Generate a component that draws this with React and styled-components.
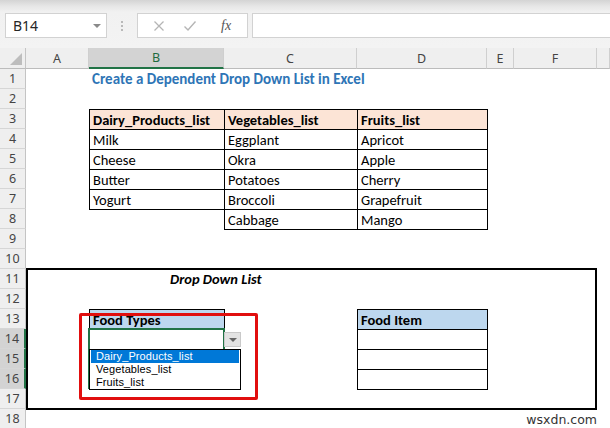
import React from 'react';
import styled, { createGlobalStyle, css } from 'styled-components';

const GlobalStyle = createGlobalStyle`
  html, body {
    margin: 0;
    padding: 0;
    background: #fff;
    overflow: hidden;
  }
`;

const cellFont = `Carlito, Lato, "Liberation Sans", sans-serif`;
const uiFont = `"Noto Sans", "Open Sans", sans-serif`;

const Window = styled.div`
  width: 610px;
  height: 428px;
  overflow: hidden;
  background: #fff;
  font-family: ${uiFont};
`;

/* ---------- formula bar ---------- */

const FormulaBar = styled.div`
  height: 48px;
  box-sizing: border-box;
  display: flex;
  align-items: flex-start;
  padding: 13px 0 0 5px;
  background: linear-gradient(#d4d4d4 0px, #e6e6e6 6px, #f1f1f1 12px, #f3f3f3 100%);
`;

const Box = styled.div`
  height: 25px;
  box-sizing: border-box;
  background: #fff;
  border: 1px solid #d2d2d2;
  display: flex;
  align-items: center;
`;

const NameBox = styled(Box)`
  width: 102px;
  padding: 0 0 0 7px;
  justify-content: space-between;
  font-size: 14px;
  color: #262626;
`;

const NameArrow = styled.span`
  width: 0;
  height: 0;
  margin-right: 5px;
  border-left: 4px solid transparent;
  border-right: 4px solid transparent;
  border-top: 4px solid #8a8a8a;
`;

const Grip = styled.div`
  width: 30px;
  height: 25px;
  display: flex;
  flex-direction: column;
  align-items: center;
  justify-content: center;
  gap: 2px;

  span {
    width: 2px;
    height: 2px;
    background: #b9b9b9;
  }
`;

const FnBox = styled(Box)`
  width: 111px;
  padding: 0 0 0 15px;
  gap: 18px;
`;

const FxLabel = styled.span`
  font-family: "Liberation Serif", serif;
  font-style: italic;
  font-size: 14px;
  color: #555;
  margin-left: 6px;
`;

const FormulaInput = styled(Box)`
  flex: 1;
  margin-left: 4px;
  border-right: none;
`;

/* ---------- sheet grid ---------- */

const Sheet = styled.div`
  position: relative;
  display: grid;
  grid-template-columns: 26px 63px 135px 133px 130px 27px 83px 1fr;
  grid-template-rows: 21px repeat(18, 20px);
`;

const Corner = styled.div`
  grid-row: 1;
  grid-column: 1;
  background: #efefef;
  border-right: 1px solid #c4c4c4;
  border-bottom: 1px solid #bcbcbc;
  box-sizing: border-box;
  position: relative;

  &::after {
    content: '';
    position: absolute;
    right: 3px;
    bottom: 3px;
    border-left: 12px solid transparent;
    border-bottom: 12px solid #bdbdbd;
  }
`;

const ColHead = styled.div`
  grid-row: 1;
  grid-column: ${({ $col }) => $col};
  box-sizing: border-box;
  display: flex;
  align-items: center;
  justify-content: center;
  font-size: 12.5px;
  color: #444;
  background: #efefef;
  border-right: 1px solid #cfcfcf;
  border-bottom: 1px solid #bcbcbc;
  ${({ $active }) =>
    $active &&
    css`
      background: #d3d3d3;
      color: #1e6b3f;
      border-bottom: 2px solid #217346;
    `}
`;

const RowHead = styled.div`
  grid-column: 1;
  grid-row: ${({ $row }) => $row + 1};
  box-sizing: border-box;
  display: flex;
  align-items: center;
  justify-content: center;
  font-size: 12.5px;
  color: #444;
  background: #efefef;
  border-right: 1px solid #c4c4c4;
  border-bottom: 1px solid #d6d6d6;
  ${({ $active }) =>
    $active &&
    css`
      background: #d3d3d3;
      border-right: 2px solid #217346;
    `}
`;

const Cell = styled.div`
  grid-row: ${({ $row }) => $row + 1};
  grid-column: ${({ $col }) => $col};
  box-sizing: border-box;
  margin: 0 -1px -1px 0;
  padding: 0 3px;
  display: flex;
  align-items: center;
  font-family: ${cellFont};
  font-size: 14.5px;
  color: #000;
  white-space: nowrap;
  background: ${({ $bg }) => $bg || 'transparent'};
  font-weight: ${({ $bold }) => ($bold ? 700 : 400)};
  border: ${({ $border }) => ($border ? '1px solid #000' : 'none')};
`;

const Title = styled.div`
  grid-row: 2;
  grid-column: 3 / 6;
  padding-left: 3px;
  display: flex;
  align-items: center;
  font-family: ${cellFont};
  font-size: 15px;
  font-weight: 700;
  color: #2e75b6;
  white-space: nowrap;
`;

const SectionFrame = styled.div`
  grid-row: 12 / 19;
  grid-column: 2 / 8;
  margin: -1px 0 -1px 0;
  border: 2px solid #000;
  pointer-events: none;
`;

const SectionLabel = styled.div`
  grid-row: 12;
  grid-column: 3 / 5;
  padding-left: 81px;
  display: flex;
  align-items: center;
  font-family: ${cellFont};
  font-size: 14.5px;
  font-weight: 700;
  font-style: italic;
  white-space: nowrap;
`;

const Selection = styled.div`
  grid-row: 15 / 18;
  grid-column: 3;
  margin: -1px -1px 0 -1px;
  border: 2px solid #217346;
  position: relative;

  &::after {
    content: '';
    position: absolute;
    right: -4px;
    bottom: -4px;
    width: 5px;
    height: 5px;
    background: #217346;
    border: 1px solid #fff;
  }
`;

/* ---------- validation dropdown ---------- */

const DropButton = styled.div`
  position: absolute;
  left: 224px;
  top: 284px;
  width: 17px;
  height: 15px;
  box-sizing: border-box;
  background: #e3e3e3;
  border: 1px solid #c9c9c9;
  display: flex;
  align-items: center;
  justify-content: center;

  &::before {
    content: '';
    border-left: 4px solid transparent;
    border-right: 4px solid transparent;
    border-top: 4px solid #666;
  }
`;

const DropList = styled.ul`
  position: absolute;
  left: 89px;
  top: 301px;
  width: 152px;
  margin: 0;
  padding: 0 1px;
  list-style: none;
  box-sizing: border-box;
  background: #fff;
  border: 1px solid #000;
`;

const DropItem = styled.li`
  height: 13px;
  line-height: 13px;
  padding-left: 5px;
  font-family: "Liberation Sans", Arial, sans-serif;
  font-size: 11px;
  letter-spacing: 0.1px;
  color: #000;
  white-space: nowrap;
  ${({ $selected }) =>
    $selected &&
    css`
      background: #0078d7;
      color: #fff;
    `}
`;

const Callout = styled.div`
  position: absolute;
  left: 79px;
  top: 265px;
  width: 179px;
  height: 87px;
  box-sizing: border-box;
  border: 3px solid #e10e0e;
  border-radius: 2px;
  pointer-events: none;
`;

const Watermark = styled.div`
  position: absolute;
  right: 12px;
  bottom: 2px;
  font-family: "DejaVu Sans", Verdana, sans-serif;
  font-size: 12.5px;
  color: #333;
  background: #fff;
  padding: 0 1px;
`;

const columns = ['A', 'B', 'C', 'D', 'E', 'F', ''];

const dairy = ['Milk', 'Cheese', 'Butter', 'Yogurt'];
const vegetables = ['Eggplant', 'Okra', 'Potatoes', 'Broccoli', 'Cabbage'];
const fruits = ['Apricot', 'Apple', 'Cherry', 'Grapefruit', 'Mango'];
const peach = '#fce4d6';
const blue = '#bdd7ee';

const XIcon = () => (
  <svg width="12" height="12" viewBox="0 0 12 12">
    <path d="M1.5 1.5 L10.5 10.5 M10.5 1.5 L1.5 10.5" stroke="#b5b5b5" strokeWidth="1.3" fill="none" />
  </svg>
);

const CheckIcon = () => (
  <svg width="14" height="12" viewBox="0 0 14 12">
    <path d="M1.5 6.5 L5 10 L12.5 1.5" stroke="#b5b5b5" strokeWidth="1.4" fill="none" />
  </svg>
);

const App = () => {
  const rows = Array.from({ length: 18 }, (_, i) => i + 1);

  return (
    <Window>
      <GlobalStyle />
      <FormulaBar>
        <NameBox>
          B14
          <NameArrow />
        </NameBox>
        <Grip>
          <span />
          <span />
          <span />
        </Grip>
        <FnBox>
          <XIcon />
          <CheckIcon />
          <FxLabel>fx</FxLabel>
        </FnBox>
        <FormulaInput />
      </FormulaBar>

      <Sheet>
        <Corner />
        {columns.map((c, i) => (
          <ColHead key={i} $col={i + 2} $active={c === 'B'}>
            {c}
          </ColHead>
        ))}
        {rows.map((r) => (
          <RowHead key={r} $row={r} $active={r >= 14 && r <= 16}>
            {r}
          </RowHead>
        ))}

        <Title>Create a Dependent Drop Down List in Excel</Title>

        <Cell $row={3} $col={3} $border $bold $bg={peach}>Dairy_Products_list</Cell>
        <Cell $row={3} $col={4} $border $bold $bg={peach}>Vegetables_list</Cell>
        <Cell $row={3} $col={5} $border $bold $bg={peach}>Fruits_list</Cell>
        {dairy.map((v, i) => (
          <Cell key={v} $row={4 + i} $col={3} $border>{v}</Cell>
        ))}
        {vegetables.map((v, i) => (
          <Cell key={v} $row={4 + i} $col={4} $border>{v}</Cell>
        ))}
        {fruits.map((v, i) => (
          <Cell key={v} $row={4 + i} $col={5} $border>{v}</Cell>
        ))}

        <SectionLabel>Drop Down List</SectionLabel>

        <Cell $row={13} $col={3} $border $bold $bg={blue}>Food Types</Cell>
        <Cell $row={13} $col={5} $border $bold $bg={blue}>Food Item</Cell>
        {[14, 15, 16].map((r) => (
          <Cell key={r} $row={r} $col={5} $border />
        ))}

        <SectionFrame />
        <Selection />

        <DropButton />
        <DropList>
          <DropItem $selected>Dairy_Products_list</DropItem>
          <DropItem>Vegetables_list</DropItem>
          <DropItem>Fruits_list</DropItem>
        </DropList>
        <Callout />
        <Watermark>wsxdn.com</Watermark>
      </Sheet>
    </Window>
  );
};

export default App;
